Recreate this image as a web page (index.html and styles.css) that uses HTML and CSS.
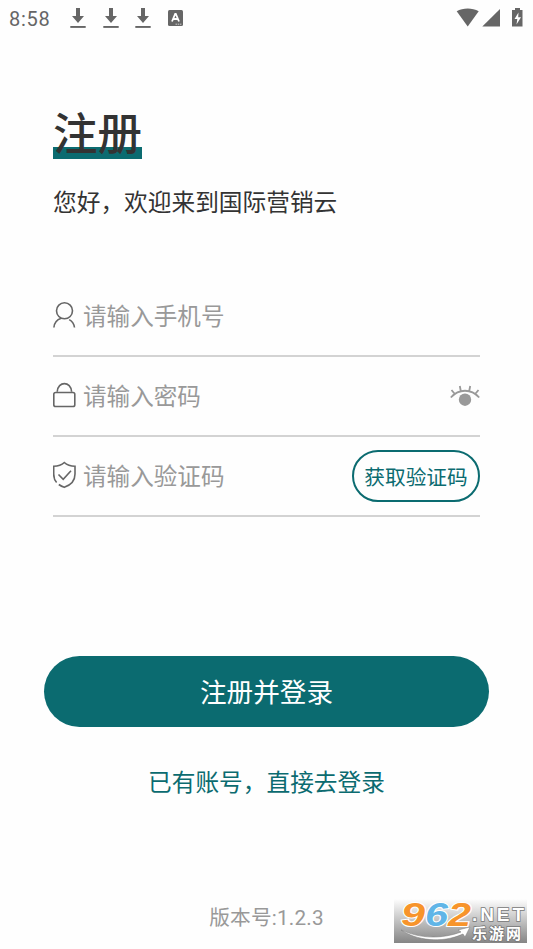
FILE: index.html
```html
<!DOCTYPE html>
<html lang="zh-CN">
<head>
<meta charset="utf-8">
<title>注册</title>
<link rel="stylesheet" href="styles.css">
</head>
<body>
<div class="screen">
  <header class="status">
    <span class="clock">8:58</span>
    <svg class="download" viewBox="0 0 16 20"><path d="M6 0h4v8h4l-6 7-6-7h4z"/><path d="M.3 18h15.4v1.9H.3z"/></svg>
    <svg class="download" viewBox="0 0 16 20"><path d="M6 0h4v8h4l-6 7-6-7h4z"/><path d="M.3 18h15.4v1.9H.3z"/></svg>
    <svg class="download" viewBox="0 0 16 20"><path d="M6 0h4v8h4l-6 7-6-7h4z"/><path d="M.3 18h15.4v1.9H.3z"/></svg>
    <svg class="app" viewBox="0 0 15 16"><rect width="15" height="16" rx="1.5"/><path d="M4 11.5 7.2 4h.6L11 11.5M5.3 9h4.400" fill="none" stroke="#fff" stroke-width="1.8"/><path d="M7.500 14.200h6" stroke="#ccc" stroke-dasharray="1.5 .7"/></svg>
    <svg class="signals" viewBox="0 0 68 20"><path d="M.7 3.200C7-.3 16.300-.3 22.700 3.200L11.700 18.500z"/><path d="M44 1v17.500H26.300z"/><path d="M59 0h5v2h2.500v16.500H56V2h3z"/><path d="M62.500 4.500 58.500 11h2.800l-.8 5.500 4.500-7.200h-2.800z" fill="#fff"/></svg>
  </header>
  <main>
    <h1>注册</h1>
    <p class="welcome">您好，欢迎来到国际营销云</p>
    <form>
      <div class="row">
        <svg class="icon" viewBox="0 0 24 28"><circle cx="11.500" cy="9.800" r="8"/><path d="M.9 26.500c.3-4.300 2.800-7.800 7.300-9.300M16.200 18.600c3.200 1.800 4.900 4.500 5.300 7.900"/></svg>
        <span class="placeholder">请输入手机号</span>
      </div>
      <div class="row">
        <svg class="icon" viewBox="0 0 24 28"><rect x=".8" y="11.500" width="21" height="14" rx="1.800"/><path d="M4.200 10.800C4.800-.1 18-.1 18.600 10.800"/></svg>
        <span class="placeholder">请输入密码</span>
        <svg class="eye" viewBox="0 0 30 22"><circle cx="15" cy="14.700" r="6.200"/><path d="M.8 12.500C9 3.500 21 3.500 29.200 12.500M4.800 9 1.500 5M10.800 6 9.800 1M19.200 6l1-5M25.200 9l3.300-4"/></svg>
      </div>
      <div class="row">
        <svg class="icon" viewBox="0 0 24 28"><path d="M3.600 21.500C1.300 19 .7 16.500.7 13V5.200C5 5.200 8.500 4.200 11.300 1.500 14.200 4.200 17.500 5.200 22 5.200V13c0 7-4 11-10.700 13.300C9.200 25.700 7.400 24.700 5.800 23.500M5.500 13.500l4.700 4.800 7.800-8.500"/></svg>
        <span class="placeholder">请输入验证码</span>
        <button class="code" type="button">获取验证码</button>
      </div>
    </form>
  </main>
  <button class="submit" type="button">注册并登录</button>
  <a class="login">已有账号，直接去登录</a>
  <footer>版本号:1.2.3</footer>
  <div class="watermark">
    <svg viewBox="0 0 133 43">
      <g class="digits"><text x="7" y="27" textLength="24" lengthAdjust="spacingAndGlyphs" fill="#f7942b">9</text><text x="31" y="27" textLength="23" lengthAdjust="spacingAndGlyphs" fill="#60b5e7">6</text><text x="54" y="27" textLength="23" lengthAdjust="spacingAndGlyphs" fill="#f7942b">2</text></g>
      <path d="M7 31c20 9 41 9 60 2l-3-2 12-3-5 10-2-3C47 45 22 41 7 31z" fill="#fff" stroke="#777" stroke-width=".5"/>
      <text class="net" x="78" y="22" textLength="52">.NET</text>
      <text class="site" x="78" y="39.500" textLength="49">乐游网</text>
    </svg>
  </div>
</div>
</body>
</html>
```
FILE: styles.css
```css
* { box-sizing: border-box; }
body { margin: 0; background: #fff; }
.screen {
  position: relative;
  display: flex;
  flex-direction: column;
  width: 533px;
  height: 949px;
  overflow: hidden;
  background: #fefefe;
  color: #333;
  font-family: Roboto, "Noto Sans CJK SC", sans-serif;
}
.status {
  display: flex;
  align-items: center;
  height: 37px;
  padding: 0 9px;
  color: #666;
  fill: #666;
}
.clock { width: 61px; font-size: 20px; letter-spacing: .7px; }
.download { width: 16px; height: 20px; margin: -1px 16.500px 0 0; }
.app { width: 15px; height: 16px; margin-top: -1px; }
.signals { width: 68px; height: 20px; margin: -2px 0 0 auto; }
main { padding: 68px 53px 0; }
h1 {
  width: 89px;
  height: 54px;
  margin: 0;
  padding-top: 3px;
  background: linear-gradient(transparent 42px, #0b6b70 42px);
  font-size: 44.500px;
  font-weight: 500;
  line-height: 54px;
}
.welcome { margin: 27px 0 0; font-size: 23.700px; line-height: 34px; }
form { margin-top: 57px; }
.row {
  display: flex;
  align-items: center;
  height: 80px;
  border-bottom: 2px solid #d3d3d3;
}
.icon {
  width: 24px;
  height: 28px;
  margin: -2px 6px 0 0;
  fill: none;
  stroke: #666;
  stroke-width: 1.600;
}
.placeholder { padding-top: 2px; color: #999; font-size: 23.600px; line-height: 34px; }
.eye {
  width: 30px;
  height: 22px;
  margin-left: auto;
  fill: none;
  stroke: #999;
  stroke-width: 1.800;
}
.eye circle { fill: #999; stroke: none; }
button { padding: 0; font-family: inherit; }
.code {
  width: 128px;
  height: 52px;
  margin-left: auto;
  border: 2px solid #0b6b70;
  border-radius: 26px;
  background: none;
  color: #0b6b70;
  font-size: 20.700px;
}
.submit {
  height: 71px;
  margin: 139.400px 44px 0;
  padding-bottom: 2px;
  border: 0;
  border-radius: 35.500px;
  background: #0b6b70;
  color: #fff;
  font-size: 26.600px;
}
.login { margin-top: 38.600px; color: #0b6b70; font-size: 23.700px; line-height: 34px; text-align: center; }
footer { margin-top: 103px; color: #999; font-size: 20.700px; letter-spacing: .2px; line-height: 30px; text-align: center; }
.watermark {
  position: absolute;
  right: 6px;
  bottom: 6px;
  width: 133px;
  height: 44px;
  background: linear-gradient(#fefefe, #858585);
}
.watermark svg { display: block; width: 133px; height: 43px; overflow: visible; }
.digits {
  font: italic 700 33px "Liberation Sans", sans-serif;
  stroke: #fff;
  stroke-width: 2;
  paint-order: stroke;
}
.net, .site { fill: #fff; stroke: #777; stroke-width: 1.500; paint-order: stroke; }
.net { font: 700 19px "Liberation Sans", sans-serif; }
.site { font: 700 15px "Noto Sans CJK SC", sans-serif; }
```
